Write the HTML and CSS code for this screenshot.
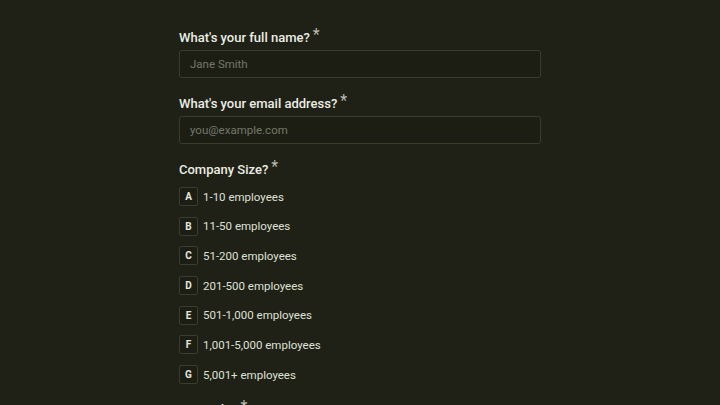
FILE: index.html
```html
<!DOCTYPE html>
<html lang="en">
<head>
<meta charset="utf-8">
<title>Form</title>
<link rel="stylesheet" href="styles.css">
</head>
<body>
<form class="form">
  <div class="field">
    <label class="label">What's your full name?<span class="req">*</span></label>
    <div class="input"><span class="placeholder">Jane Smith</span></div>
  </div>
  <div class="field">
    <label class="label">What's your email address?<span class="req">*</span></label>
    <div class="input"><span class="placeholder">you@example.com</span></div>
  </div>
  <div class="field">
    <label class="label">Company Size?<span class="req">*</span></label>
    <div class="options">
      <div class="option"><span class="key">A</span><span class="opt-text">1-10 employees</span></div>
      <div class="option"><span class="key">B</span><span class="opt-text">11-50 employees</span></div>
      <div class="option"><span class="key">C</span><span class="opt-text">51-200 employees</span></div>
      <div class="option"><span class="key">D</span><span class="opt-text">201-500 employees</span></div>
      <div class="option"><span class="key">E</span><span class="opt-text">501-1,000 employees</span></div>
      <div class="option"><span class="key">F</span><span class="opt-text">1,001-5,000 employees</span></div>
      <div class="option"><span class="key">G</span><span class="opt-text">5,001+ employees</span></div>
    </div>
  </div>
  <div class="field">
    <label class="label">Your role?<span class="req">*</span></label>
  </div>
</form>
</body>
</html>
```

FILE: styles.css
```css
html, body {
  margin: 0;
  padding: 0;
  background: #1f2117;
  height: 100%;
  overflow: hidden;
}
body {
  font-family: Roboto, "Noto Sans", sans-serif;
  color: #e9eadf;
}
.form {
  width: 362px;
  margin: 0 auto;
  padding-top: 29px;
  display: flex;
  flex-direction: column;
  gap: 17px;
}
.field {
  display: flex;
  flex-direction: column;
  gap: 4px;
}
.label {
  display: block;
  height: 17px;
  font-size: 13px;
  line-height: 17px;
  font-weight: 500;
  color: #ecede3;
  white-space: nowrap;
}
.req {
  margin-left: 3px;
  font-size: 16px;
  line-height: 0;
  vertical-align: 2px;
  font-weight: 400;
  color: #b9bbae;
}
.input {
  height: 28px;
  box-sizing: border-box;
  border: 1px solid #393d2c;
  border-radius: 3px;
  background: #1c1e14;
  display: flex;
  align-items: center;
  padding: 0 10px;
}
.placeholder {
  font-size: 11.5px;
  color: #74786a;
}
.options {
  display: flex;
  flex-direction: column;
  gap: 10.7px;
  padding-top: 5px;
}
.option {
  display: flex;
  align-items: center;
  gap: 5px;
  height: 19px;
}
.key {
  width: 19px;
  height: 19px;
  box-sizing: border-box;
  border: 1px solid #393d2c;
  border-radius: 2px;
  background: #1c1e14;
  display: flex;
  align-items: center;
  justify-content: center;
  font-size: 10px;
  font-weight: 700;
  color: #e6e7dc;
}
.opt-text {
  font-size: 11.5px;
  color: #dfe0d5;
}
```
